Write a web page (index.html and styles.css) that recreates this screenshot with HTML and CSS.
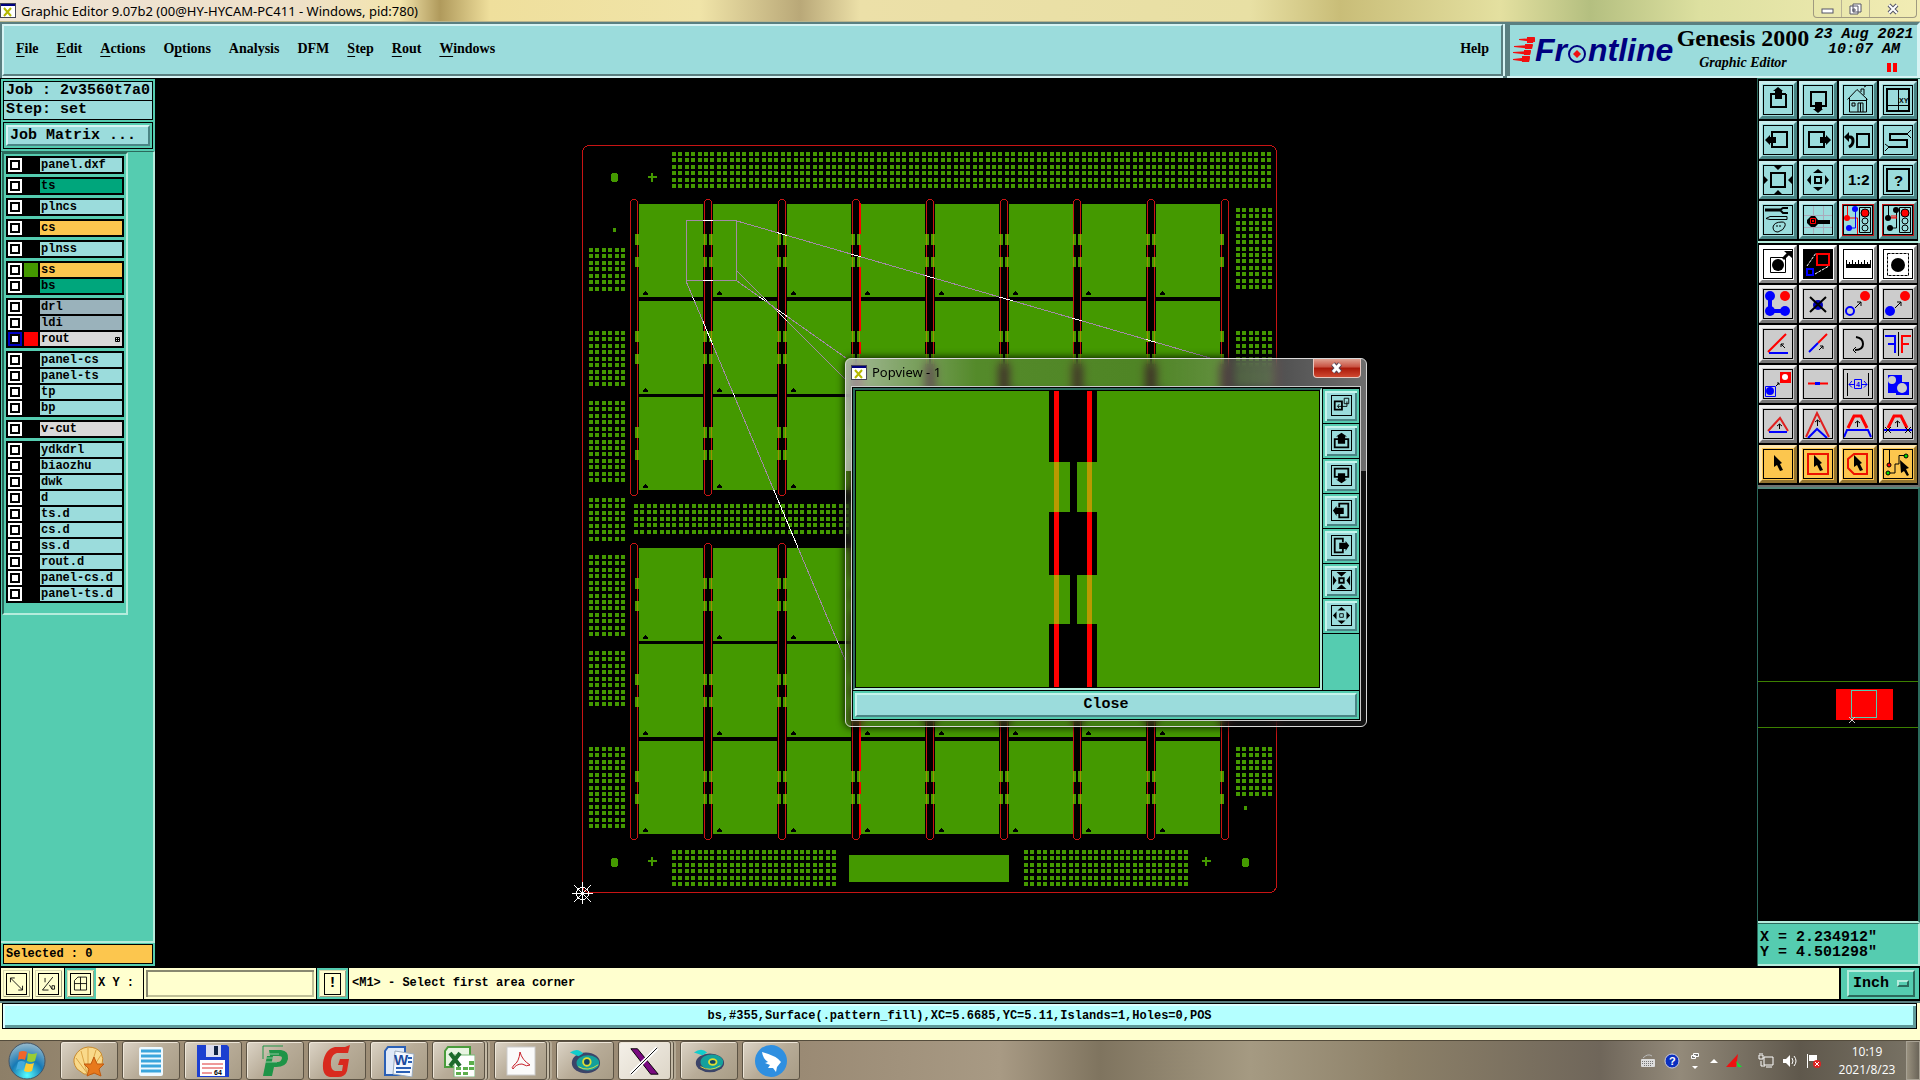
FILE: index.html
```html
<!DOCTYPE html>
<html lang="en">
<head>
  <meta charset="UTF-8">
  <title>Graphic Editor 9.07b2</title>
  <link rel="stylesheet" href="styles.css">
</head>
<body>
  <header class="titlebar">
    <svg class="app-icon" viewBox="0 0 16 15"><rect x="0" y="0" width="16" height="15" fill="#445"/><rect x="1" y="3" width="14" height="11" fill="#fff"/><rect x="1" y="1" width="14" height="2" fill="#000080"/><path d="M4 5l7 8M11 5l-7 8" stroke="#b5b800" stroke-width="2"/></svg>
    <span class="title">Graphic Editor 9.07b2 (00@HY-HYCAM-PC411 - Windows, pid:780)</span>
    <div class="win-buttons">
      <button aria-label="Minimize"><svg width="14" height="12"><rect x="1" y="6" width="11" height="4" fill="#fff" stroke="#556"/></svg></button>
      <button aria-label="Restore"><svg width="14" height="12"><path d="M4 1h8v8h-8zM1 3h8v8h-8z" fill="#fff" stroke="#556"/><path d="M4 6h2v2h-2z" fill="none" stroke="#556"/></svg></button>
      <button class="wide" aria-label="Close"><svg width="14" height="12"><path d="M3 2l8 8M11 2l-8 8" stroke="#556" stroke-width="4"/><path d="M3 2l8 8M11 2l-8 8" stroke="#fff" stroke-width="2"/></svg></button>
    </div>
  </header>

  <div class="top">
    <nav class="menubar">
      <a href="#"><u>F</u>ile</a>
      <a href="#"><u>E</u>dit</a>
      <a href="#"><u>A</u>ctions</a>
      <a href="#">O<u>p</u>tions</a>
      <a href="#">Analysis</a>
      <a href="#">DFM</a>
      <a href="#"><u>S</u>tep</a>
      <a href="#"><u>R</u>out</a>
      <a href="#"><u>W</u>indows</a>
      <a href="#" class="help">Help</a>
    </nav>
    <div class="brand">
      <div class="logo">
        <svg class="speed" viewBox="0 0 22 26"><path d="M22 1L6 2v1l16 2zM20 8L1 9v1l18 2zM18 14L0 15v1l17 2zM17 20L0 22v1l16 2z" fill="#f01010"/><path d="M14 0h8l-2 6h-6zM12 7h8l-2 5h-6zM11 13h7l-1 5h-6zM9 19h8l-1 6H9z" fill="#f01010"/></svg>
        <span>Fr</span><svg class="ring" viewBox="0 0 21 21"><circle cx="10" cy="11" r="8" fill="none" stroke="#000080" stroke-width="2"/><path d="M10 7l4 4-4 4-4-4z" fill="#f01010"/></svg><span>ntline</span>
      </div>
      <div class="product">
        <div class="genesis">Genesis 2000</div>
        <div class="sub">Graphic Editor</div>
      </div>
      <div class="clock">23 Aug 2021<br>10:07 AM<i class="pause"></i></div>
    </div>
  </div>

  <main>
    <aside class="left">
      <div class="job">
        <div>Job : 2v3560t7a0</div>
        <div>Step: set</div>
      </div>
      <div class="matrix"><button>Job Matrix ...</button></div>
      <div class="layer-area">
        <div class="layers">
          <div class="group"><label><input type="checkbox"><i></i><span>panel.dxf</span></label></div>
          <div class="group"><label><input type="checkbox"><i></i><span class="green">ts</span></label></div>
          <div class="group"><label><input type="checkbox"><i></i><span>plncs</span></label></div>
          <div class="group"><label><input type="checkbox"><i></i><span class="amber">cs</span></label></div>
          <div class="group"><label><input type="checkbox"><i></i><span>plnss</span></label></div>
          <div class="group">
            <label><input type="checkbox"><i class="c-green"></i><span class="amber">ss</span></label>
            <label><input type="checkbox"><i></i><span class="green">bs</span></label>
          </div>
          <div class="group">
            <label><input type="checkbox"><i></i><span class="steel">drl</span></label>
            <label><input type="checkbox"><i></i><span class="steel">ldi</span></label>
            <label><input type="checkbox" class="work"><i class="c-red"></i><span class="grey">rout<svg viewBox="0 0 5 5"><path d="M.5.5h4v4h-4zM2.5 0v5M0 2.5h5" fill="none" stroke="#000"/></svg></span></label>
          </div>
          <div class="group">
            <label><input type="checkbox"><i></i><span>panel-cs</span></label>
            <label><input type="checkbox"><i></i><span>panel-ts</span></label>
            <label><input type="checkbox"><i></i><span>tp</span></label>
            <label><input type="checkbox"><i></i><span>bp</span></label>
          </div>
          <div class="group"><label><input type="checkbox"><i></i><span class="grey">v-cut</span></label></div>
          <div class="group">
            <label><input type="checkbox"><i></i><span>ydkdrl</span></label>
            <label><input type="checkbox"><i></i><span>biaozhu</span></label>
            <label><input type="checkbox"><i></i><span>dwk</span></label>
            <label><input type="checkbox"><i></i><span>d</span></label>
            <label><input type="checkbox"><i></i><span>ts.d</span></label>
            <label><input type="checkbox"><i></i><span>cs.d</span></label>
            <label><input type="checkbox"><i></i><span>ss.d</span></label>
            <label><input type="checkbox"><i></i><span>rout.d</span></label>
            <label><input type="checkbox"><i></i><span>panel-cs.d</span></label>
            <label><input type="checkbox"><i></i><span>panel-ts.d</span></label>
          </div>
        </div>
      </div>
      <div class="selected">Selected : 0</div>
    </aside>

    <section class="canvas">
      <svg id="board" viewBox="155 78 1602 888" preserveAspectRatio="xMinYMin meet" shape-rendering="crispEdges"></svg>

      <div class="popview">
        <div class="pop-title">
          <svg class="app-icon" viewBox="0 0 16 15"><rect x="0" y="0" width="16" height="15" fill="#445"/><rect x="1" y="3" width="14" height="11" fill="#fff"/><rect x="1" y="1" width="14" height="2" fill="#000080"/><path d="M4 5l7 8M11 5l-7 8" stroke="#b5b800" stroke-width="2"/></svg>
          <span>Popview - 1</span>
          <button aria-label="Close"><svg width="14" height="12"><path d="M3 2l7 8M10 2l-7 8" stroke="#545" stroke-width="5"/><path d="M3 2l7 8M10 2l-7 8" stroke="#fff" stroke-width="3"/></svg></button>
        </div>
        <div class="pop-body">
          <div class="pop-main">
            <div class="pop-view">
              <svg viewBox="0 0 464 297" preserveAspectRatio="xMidYMid slice" shape-rendering="crispEdges">
                <rect width="464" height="297" fill="#449900"/>
                <path d="M193 0h49v71h-49zM193 121h49v63h-49zM193 234h49v63h-49zM214 0h7v297h-7z" fill="#000"/>
                <path d="M198 0h5v297h-5zM231 0h6v297h-6z" fill="#f00"/>
                <path d="M198 71h5v50h-5zM231 71h6v50h-6zM198 184h5v50h-5zM231 184h6v50h-6z" fill="#b99a00"/>
              </svg>
            </div>
            <div class="pop-tools">
              <button aria-label="Pick"><svg viewBox="0 0 21 21"><path d="M3 6h8v9H3z" fill="none" stroke="#000" stroke-width="2"/><path d="M13.500 2.500h5v6h-5zM16.500 6v5.500h-10M8 9l-2 2.500 2 2" fill="none" stroke="#000"/></svg></button>
              <button aria-label="Pan up"><svg viewBox="0 0 21 21"><path d="M7 9H3v9h15V9h-4" fill="none" stroke="#000" stroke-width="2"/><path d="M10.500 2l6 4h-2v8h-8V6h-2z"/></svg></button>
              <button aria-label="Pan down"><svg viewBox="0 0 21 21"><path d="M7 12H3V3h15v9h-4" fill="none" stroke="#000" stroke-width="2"/><path d="M10.500 19l6-4h-2V8h-8v7h-2z"/></svg></button>
              <button aria-label="Pan left"><svg viewBox="0 0 21 21"><path d="M8 7V3h10v15H8v-4" fill="none" stroke="#000" stroke-width="2"/><path d="M1 10.500l4-5v2h8v7H5v2z"/></svg></button>
              <button aria-label="Pan right"><svg viewBox="0 0 21 21"><path d="M12 7V3H3v15h9v-4" fill="none" stroke="#000" stroke-width="2"/><path d="M19 10.500l-4-5v2H8v7h7v2z"/></svg></button>
              <button aria-label="Zoom in"><svg viewBox="0 0 21 21"><path d="M8 8h5v5H8z" fill="none" stroke="#000" stroke-width="2"/><path d="M5 1h11l-5.500 5zM5 20h11l-5.500-5zM1 5v11l4-5.500zM20 5v11l-4-5.500z"/></svg></button>
              <button aria-label="Zoom out"><svg viewBox="0 0 21 21"><path d="M8.500 8.500h4v4h-4z" fill="none" stroke="#000"/><path d="M6 5h9l-4.500-4zM6 16h9l-4.500 4zM5 6v9l-4-4.500zM16 6v9l4-4.500z"/></svg></button>
            </div>
          </div>
          <div class="pop-foot"><button>Close</button></div>
        </div>
      </div>
    </section>

    <aside class="right">
      <div class="tools">
        <button aria-label="Pan up"><svg viewBox="0 0 30 30"><path d="M8 9v13h15V9" fill="none" stroke="#000" stroke-width="2"/><path d="M7 9h16" stroke="#000" stroke-width="2"/><path d="M15 2l5 4h-1v8h-7V6h-2z"/></svg></button>
        <button aria-label="Pan down"><svg viewBox="0 0 30 30"><path d="M8 7h15v14H8z" fill="none" stroke="#000" stroke-width="2"/><path d="M15 28l5-4h-1v-7h-7v7h-2z"/></svg></button>
        <button aria-label="Home"><svg viewBox="0 0 30 30"><path d="M4.500 14.500L14 4.500l10.500 10M6.500 13v14h17V13M6 15.500h18M18 7V4h3v6M9 18h3v3H9zM15 27v-9h5v9M17.500 18v9M21 2l2-1" fill="none" stroke="#000"/></svg></button>
        <button aria-label="Set origin"><svg viewBox="0 0 30 30"><path d="M4 4h22v22H4z" fill="none" stroke="#000" stroke-width="2"/><path d="M15.500 3v24M3 20.500h24" stroke="#000"/><text x="16" y="18" class="t7">XY</text></svg></button>
        <button aria-label="Pan left"><svg viewBox="0 0 30 30"><path d="M9 7h15v15H9z" fill="none" stroke="#000" stroke-width="2"/><path d="M2 15l5-5v2h6v6H7v2z"/></svg></button>
        <button aria-label="Pan right"><svg viewBox="0 0 30 30"><path d="M6 7h15v15H6z" fill="none" stroke="#000" stroke-width="2"/><path d="M28 15l-5-5v2h-6v6h6v2z"/></svg></button>
        <button aria-label="Previous view"><svg viewBox="0 0 30 30"><path d="M14 9h12v13H14z" fill="none" stroke="#000" stroke-width="2"/><path d="M4 12h3q3 0 3 4t-4 6" fill="none" stroke="#000" stroke-width="3"/><path d="M1 12l5-5v10z"/></svg></button>
        <button aria-label="Serpentine"><svg viewBox="0 0 30 30"><path d="M24 9H7v6h17v7H5" fill="none" stroke="#000" stroke-width="2"/><path d="M24 9l4-4M24 9l4 4M6 22l-4-3M6 22l-4 4" stroke="#000"/></svg></button>
        <button aria-label="Zoom in"><svg viewBox="0 0 30 30"><path d="M8 8h14v14H8z" fill="none" stroke="#000" stroke-width="2"/><path d="M10 0h10l-5 5zM10 30h10l-5-5zM0 10v10l5-5zM30 10v10l-5-5z"/></svg></button>
        <button aria-label="Zoom out"><svg viewBox="0 0 30 30"><path d="M12 12h6v6h-6z" fill="none" stroke="#000" stroke-width="2"/><path d="M10 8h10l-5-4zM10 22h10l-5 4zM8 10v10l-4-5zM22 10v10l4-5z"/></svg></button>
        <button aria-label="Zoom ratio"><svg viewBox="0 0 30 30"><text x="5" y="20" class="t14">1:2</text></svg></button>
        <button aria-label="Info"><svg viewBox="0 0 30 30"><path d="M4 4h22v22H4z" fill="none" stroke="#000" stroke-width="2"/><text x="11" y="21" class="t14">?</text></svg></button>
        <button aria-label="Setup"><svg viewBox="0 0 30 30"><path d="M2 5h15" stroke="#000" stroke-width="3"/><path d="M25 3h-5l-3 2 3 3h5" fill="none" stroke="#000" stroke-width="2"/><path d="M3 13.500L7 11.500h17v3H7zM19 17q4 0 3 4t-7 6q-5 0-5-5 1-5 9-5zM13 21h2M17 20v2" fill="none" stroke="#000"/></svg></button>
        <button aria-label="Magnifier"><svg viewBox="0 0 30 30"><path d="M10.500 1v28M20.500 1v28M1 10.500h28M1 22.500h28" stroke="#aab"/><path d="M8 11h4l3 4h12v4H15l-3 3H8l-4-4v-3z"/><path d="M7.500 13.500h5v5h-5z" fill="none" stroke="#f00"/><path d="M9 15h2v2H9z" fill="#f00"/></svg></button>
        <button class="hot" aria-label="Check nets"><svg viewBox="0 0 30 30"><path d="M4.500 0v13h10v17" fill="none" stroke="#f00"/><path d="M12.500 4v19H6" fill="none" stroke="#00f"/><circle cx="12" cy="4" r="3" fill="#00f"/><circle cx="6" cy="23" r="3" fill="#00f"/><circle cx="4" cy="13" r="3" fill="#f00"/><path d="M16.500 2.500h11v25h-11z" fill="none" stroke="#000"/><circle cx="22" cy="8" r="4" fill="#f00" stroke="#000"/><circle cx="22" cy="16" r="3" fill="none" stroke="#000"/><circle cx="22" cy="23" r="3" fill="none" stroke="#000"/></svg></button>
        <button class="hot" aria-label="Check shorts"><svg viewBox="0 0 30 30"><path d="M5.500 0v13M13.500 4v10M7.500 23h6v-9" fill="none" stroke="#000"/><path d="M8 13h6M9 10v3M11 10v3M13 10v3" stroke="#f00"/><circle cx="13" cy="5" r="3"/><circle cx="5" cy="13" r="3"/><circle cx="7" cy="23" r="3"/><path d="M16.500 2.500h11v25h-11z" fill="none" stroke="#000"/><circle cx="22" cy="8" r="4" fill="#f00" stroke="#000"/><circle cx="22" cy="16" r="3" fill="none" stroke="#000"/><circle cx="22" cy="23" r="3" fill="none" stroke="#000"/></svg></button>
      </div>
      <div class="tools edit">
        <button class="white" aria-label="Select feature"><svg viewBox="0 0 30 30"><path d="M7.500 8.500h15v15h-15z" fill="none" stroke="#000"/><circle cx="15" cy="16" r="6"/><path d="M20 10l6-6" stroke="#000" stroke-width="3"/><path d="M21 2h8v7z"/></svg></button>
        <button class="white" aria-label="Popview"><svg viewBox="0 0 30 30"><rect width="30" height="30"/><path d="M14 5h12v11H14z" fill="none" stroke="#f00" stroke-width="2"/><path d="M4 20h6v6H4z" fill="none" stroke="#00f" stroke-width="2"/><path d="M4 17l9-13M12 25l14-8" stroke="#fff" stroke-dasharray="3 1"/></svg></button>
        <button class="white" aria-label="Measure"><svg viewBox="0 0 30 30"><path d="M3 15h25v4H3z"/><path d="M3.500 11v5M6.500 13v3M9.500 11v5M12.500 13v3M15.500 11v5M18.500 13v3M21.500 11v5M24.500 13v3M27.500 11v5" stroke="#000"/></svg></button>
        <button class="white" aria-label="Highlight"><svg viewBox="0 0 30 30"><path d="M4.500 4.500h21v22h-21z" fill="none" stroke="#000" stroke-dasharray="3 1"/><circle cx="15" cy="16" r="7"/></svg></button>
        <button aria-label="Move line ends"><svg viewBox="0 0 30 30"><path d="M7 7v15h15" fill="none" stroke="#00f" stroke-width="4"/><circle cx="7" cy="7" r="5" fill="#00f"/><circle cx="7" cy="22" r="5" fill="#00f"/><circle cx="22" cy="22" r="5" fill="#00f"/><circle cx="22" cy="7" r="5" fill="#f00"/></svg></button>
        <button aria-label="Delete"><svg viewBox="0 0 30 30"><circle cx="15" cy="16" r="5" fill="#00b"/><path d="M7 8l16 15M23 8L7 23" stroke="#000" stroke-width="2"/></svg></button>
        <button aria-label="Move"><svg viewBox="0 0 30 30"><circle cx="7" cy="22" r="4" fill="none" stroke="#00f" stroke-width="2"/><circle cx="22" cy="7" r="5" fill="#f00"/><path d="M12 19l6-6M14 13h4v4" fill="none" stroke="#000"/></svg></button>
        <button aria-label="Copy"><svg viewBox="0 0 30 30"><circle cx="7" cy="22" r="5" fill="#00f"/><circle cx="22" cy="7" r="5" fill="#f00"/><path d="M12 19l6-6M14 13h4v4" fill="none" stroke="#000"/></svg></button>
        <button aria-label="Rotate line"><svg viewBox="0 0 30 30"><path d="M5 23L23 5" stroke="#f00" stroke-width="2"/><path d="M6 24h19" stroke="#00f" stroke-width="2"/><path d="M22 19l-4-4M18 18v-3h3" fill="none" stroke="#000"/></svg></button>
        <button aria-label="Extend line"><svg viewBox="0 0 30 30"><path d="M15 14l9-9" stroke="#f00" stroke-width="2"/><path d="M6 23l9-9" stroke="#00f" stroke-width="2"/><path d="M16 21l4-4M17 17h3v3" fill="none" stroke="#000"/></svg></button>
        <button aria-label="Rotate"><svg viewBox="0 0 30 30"><path d="M13 8q7 1 7 7t-8 6" fill="none" stroke="#000" stroke-width="2"/><path d="M13 18l-3 3 3 3" fill="none" stroke="#000"/></svg></button>
        <button aria-label="Mirror"><svg viewBox="0 0 30 30"><path d="M2 7h10v17M12 15H5" fill="none" stroke="#00f" stroke-width="2"/><path d="M28 7H19v17M19 15h7" fill="none" stroke="#f00" stroke-width="2"/><path d="M15.500 3v24" stroke="#000"/></svg></button>
        <button aria-label="Change symbol"><svg viewBox="0 0 30 30"><path d="M17 3h11v11H17z" fill="#f00"/><circle cx="22" cy="8" r="3" fill="#fff"/><path d="M2.500 17.500h10v10h-10z" fill="none" stroke="#00f"/><circle cx="7" cy="22" r="4" fill="#00f"/><path d="M13 17l3-3M14 14h2v2" fill="none" stroke="#000"/></svg></button>
        <button aria-label="Break line"><svg viewBox="0 0 30 30"><path d="M5 14.500h20" stroke="#f00" stroke-width="2"/><path d="M12 14.500h5" stroke="#00f" stroke-width="3"/></svg></button>
        <button aria-label="Spacing"><svg viewBox="0 0 30 30"><path d="M4.500 4v23M25.500 4v23" stroke="#000"/><path d="M6 15.500h5M19 15.500h5M9 12l-3 3.500 3 3M21 12l3 3.500-3 3M11.500 10.500h7v9h-7z" fill="none" stroke="#00f"/><text x="13" y="18" class="t7 blue">4</text></svg></button>
        <button aria-label="Surface"><svg viewBox="0 0 30 30"><path d="M5 6h14v7h7v13H13v-2H5z" fill="#00f"/><circle cx="9" cy="11" r="4" fill="#ccc"/><circle cx="19" cy="19" r="5" fill="#ccc"/></svg></button>
        <button aria-label="Stretch corner"><svg viewBox="0 0 30 30"><path d="M5 22L17 9l8 13" fill="none" stroke="#e02020" stroke-width="2"/><path d="M6 23h18" stroke="#00f" stroke-width="2"/><path d="M16.500 20v-5M14 17l2.500-2 2.500 2" fill="none" stroke="#000"/></svg></button>
        <button aria-label="Stretch peak"><svg viewBox="0 0 30 30"><path d="M3 28L14 4l12 24" fill="none" stroke="#e02020" stroke-width="2"/><path d="M5 29l9-9 10 9" fill="none" stroke="#00f" stroke-width="2"/><path d="M14.500 17v-6M12 13l2.500-2 2.500 2" fill="none" stroke="#000"/></svg></button>
        <button aria-label="Stretch line"><svg viewBox="0 0 30 30"><path d="M5 19l6-12h7l6 12" fill="none" stroke="#f00" stroke-width="3"/><path d="M1 28l3-7h21l3 7" fill="none" stroke="#00f" stroke-width="2"/><path d="M14.500 18v-6M12 14l2.500-2 2.500 2" fill="none" stroke="#000"/></svg></button>
        <button aria-label="Stretch parallel"><svg viewBox="0 0 30 30"><path d="M5 19l6-12h7l6 12" fill="none" stroke="#f00" stroke-width="3"/><path d="M1 21h28" stroke="#00f" stroke-width="2"/><path d="M14.500 18v-6M12 14l2.500-2 2.500 2M2 18l6 6M8 18l-6 6M22 18l6 6M28 18l-6 6" fill="none" stroke="#000"/></svg></button>
        <button class="gold" aria-label="Single select"><svg viewBox="0 0 30 30"><path d="M11 6l8 8-2 1 3 6-3 1-3-6-3 2z"/></svg></button>
        <button class="gold" aria-label="Frame select"><svg viewBox="0 0 30 30"><path d="M5 5h20v20H5z" fill="none" stroke="#e10" stroke-width="2"/><path d="M11 6l8 8-2 1 3 6-3 1-3-6-3 2z"/></svg></button>
        <button class="gold" aria-label="Polygon select"><svg viewBox="0 0 30 30"><path d="M11 5h13v20H11l-6-6v-9z" fill="none" stroke="#e10" stroke-width="2"/><path d="M11 6l8 8-2 1 3 6-3 1-3-6-3 2z"/></svg></button>
        <button class="gold" aria-label="Net select"><svg viewBox="0 0 30 30"><path d="M6.500 0v17M5 24h7v-9h4V6.500h7" fill="none" stroke="#000"/><circle cx="6" cy="16" r="2" fill="#f00" stroke="#000"/><circle cx="5" cy="24" r="2" fill="#0d0" stroke="#000"/><circle cx="23" cy="7" r="2" fill="#0d0" stroke="#000"/><path d="M17 11l9 8-3 1 3 6-2 1-3-5-3 2z"/></svg></button>
      </div>
      <div class="overview">
        <svg viewBox="0 0 160 430" shape-rendering="crispEdges">
          <path d="M0 192.500h160M0 238.500h160" stroke="#3c8000"/>
          <rect x="78" y="200" width="57" height="31" fill="#f00"/>
          <path d="M93.500 201.500h25v27h-25z" fill="none" stroke="#55ccb0"/>
          <path d="M91 228l6 6M97 228l-6 6" stroke="#ccc"/>
        </svg>
      </div>
      <div class="coords">X = 2.234912"<br>Y = 4.501298"</div>
    </aside>
  </main>

  <div class="command">
    <button aria-label="Absolute"><svg viewBox="0 0 22 22"><path d="M4 4l14 14M4 9V4h5M18 13v5h-5" fill="none" stroke="#000"/></svg></button>
    <button aria-label="Angle"><svg viewBox="0 0 22 22"><path d="M4 18L16 3M4 18h7M7 4v5M12 12l3 5M15 13h3v4h-3z" fill="none" stroke="#000"/></svg></button>
    <button class="on" aria-label="Grid"><svg viewBox="0 0 22 22"><path d="M4 18V7l4-4h10v15zM4 10.500h14M11 3v15" fill="none" stroke="#000"/></svg></button>
    <label for="xy">X Y :</label>
    <input type="text" id="xy">
    <button class="on warn"><span>!</span></button>
    <div class="message">&lt;M1&gt; - Select first area corner</div>
    <div class="units">
      <select aria-label="Units"><option>Inch</option><option>MM</option></select><i></i>
    </div>
  </div>

  <div class="status"><div>bs,#355,Surface(.pattern_fill),XC=5.6685,YC=5.11,Islands=1,Holes=0,POS</div></div>

  <footer class="taskbar">
    <button class="start" aria-label="Start"><svg viewBox="0 0 38 38">
      <defs><radialGradient id="orb" cx=".5" cy=".9" r=".9"><stop offset="0" stop-color="#5ff"/><stop offset=".5" stop-color="#1779b5"/><stop offset="1" stop-color="#9bc"/></radialGradient></defs>
      <circle cx="19" cy="19" r="18" fill="url(#orb)" stroke="#456"/>
      <path d="M11 10q4-2 8 0l-2 8q-4-2-7 0z" fill="#f0652a"/><path d="M20 11q4 2 9 0l-2 8q-4 2-8 0z" fill="#9c3"/><path d="M10 20q3-2 7 0l-2 8q-4-2-7 0z" fill="#4ad"/><path d="M18 21q4 2 8 0l-2 8q-4 2-8 0z" fill="#fc3"/>
    </svg></button>
    <button class="task" aria-label="Shell"><svg viewBox="0 0 32 32"><path d="M11 29l-7-5Q-1 17 2 11 6 3 15 2q9 0 13 6 3 5 1 12l-9 9z" fill="#f9d98a" stroke="#c98a2c"/><path d="M14 28L3 13M14 28L8 6M15 28V3M16 28l7-23M17 27L28 10" stroke="#dba548"/><path d="M21 12l3 7 7 0-5 5 2 7-7-3-7 3 2-7-5-5 7 0z" fill="#e8791c" stroke="#c05a10"/></svg></button>
    <button class="task" aria-label="Notes"><svg viewBox="0 0 32 32"><rect x="4" y="2" width="24" height="29" rx="2" fill="#eef9ff"/><path d="M6 6h20M6 11h20M6 16h20M6 21h20M6 26h20" stroke="#3aa5dc" stroke-width="3"/></svg></button>
    <button class="task" aria-label="Disk"><svg viewBox="0 0 32 32"><path d="M0 0h30l2 2v30H0z" fill="#1c3fd0"/><rect x="9" y="0" width="15" height="12" fill="#dde"/><rect x="17" y="1" width="4" height="9" fill="#124"/><rect x="3" y="15" width="25" height="16" fill="#fff"/><path d="M5 19h21M5 23h21M5 28h10" stroke="#d33" stroke-width="1"/><text x="17" y="30" class="t7">64</text></svg></button>
    <button class="task" aria-label="P tool"><svg viewBox="0 0 32 32"><path d="M4 14V1h20" fill="none" stroke="#1e9447"/><path d="M4 31l4-20h6l-4 20z" fill="#1e9447"/><path d="M10 5h12q8 1 7 9-2 9-14 8l-2 9H8l3-14h8q3 0 4-4 0-2-3-2h-9z" fill="#1e9447"/><path d="M8 9h12M7 13h10M6 17h12" stroke="#8fc59d"/></svg></button>
    <button class="task" aria-label="G tool"><svg viewBox="0 0 32 32"><path d="M29 0l-2 8H16q-5 1-6 8-1 9 4 10h7l1-6h-5l2-6h9l-2 12q-2 6-9 6H9q-8-1-7-14Q4 4 14 2h10z" fill="#d82a1e"/></svg></button>
    <button class="task" aria-label="Word"><svg viewBox="0 0 32 32"><path d="M5 2h17v28H2V6z" fill="#dfe9f8" stroke="#2a5fb5" stroke-width="2"/><path d="M12 6l19 3-2 23-19-3z" fill="#f4f8ff" stroke="#9ab"/><text x="11" y="20" class="t14 word">W</text><path d="M25 13h4M25 17h4M13 23h15M13 27h14" stroke="#2a5fb5" stroke-width="2"/></svg></button>
    <button class="task stacked" aria-label="Excel"><svg viewBox="0 0 32 32"><path d="M5 2h22v20H2V6z" fill="#e8f4e2" stroke="#4a9c3c" stroke-width="2"/><path d="M11 10h21v22H11z" fill="#fff" stroke="#7b7"/><path d="M13 22h5v3h-5zM20 22h5v3h-5zM13 27h5v3h-5zM20 27h5v3h-5zM26 16h5v4h-5zM26 22h5v3h-5z" fill="#5cae4c"/><path d="M7 8l10 13M17 8L7 21" stroke="#1c6a2b" stroke-width="4"/></svg></button>
    <button class="task stacked" aria-label="PDF reader"><svg viewBox="0 0 32 32"><rect x="2" y="2" width="28" height="28" fill="#fafafa" stroke="#ccc"/><path d="M15 7q2 8 10 13-3 2-8-1-6 0-9 5-2-1 1-4 5-3 6-13z" fill="none" stroke="#c8202a" stroke-width="1"/></svg></button>
    <button class="task" aria-label="Genesis"><svg viewBox="0 0 34 32"><ellipse cx="18" cy="18" rx="15" ry="11" fill="#3c4468"/><ellipse cx="20" cy="18" rx="12" ry="8" fill="#14a09c"/><ellipse cx="19" cy="17" rx="4" ry="4" fill="#146" stroke="#dd3" stroke-width="2"/><path d="M10 22q10 6 21-2" fill="none" stroke="#dd4"/><path d="M1 7q8-6 14 1l-5 3z" fill="#1cc"/></svg></button>
    <button class="task active stacked" aria-label="X server"><svg viewBox="0 0 34 32"><path d="M2 3h7l22 27h-8z" fill="#7a0a80" stroke="#000"/><path d="M30 2L2 30" stroke="#fff" stroke-width="4"/><path d="M30 2L2 30" stroke="#000"/></svg></button>
    <button class="task" aria-label="Genesis 2"><svg viewBox="0 0 34 32"><ellipse cx="18" cy="18" rx="15" ry="10" fill="#3c4468"/><ellipse cx="20" cy="17" rx="12" ry="8" fill="#14a09c"/><ellipse cx="21" cy="17" rx="4" ry="3" fill="#146" stroke="#dd3" stroke-width="2"/><path d="M8 22q10 6 21-1" fill="none" stroke="#dd4"/><path d="M1 7q8-6 14 0l-5 3z" fill="#1cc"/></svg></button>
    <button class="task" aria-label="Messenger"><svg viewBox="0 0 32 32"><circle cx="16" cy="16" r="16" fill="#2f8fe0"/><path d="M7 7q15 4 19 10l-4 5-1 5-3-4h-5l2-3-5-2 3-1q-5-3-6-10z" fill="#fff"/></svg></button>
    <div class="tray">
      <svg class="t-kbd" viewBox="0 0 16 14"><path d="M3 4q5-5 9-2" fill="none" stroke="#bbb"/><rect x="1" y="5" width="14" height="8" rx="1" fill="#ddd"/><path d="M2 7.500h12M2 9.500h12M4 11.500h8" stroke="#777" stroke-dasharray="1 1"/></svg>
      <svg class="t-help" viewBox="0 0 16 16"><circle cx="8" cy="8" r="7" fill="#0a2fc0" stroke="#ccd"/><text x="5" y="12" class="q">?</text></svg>
      <svg class="t-win" viewBox="0 0 10 18"><path d="M3.500 1.500h5v3h-5zM1.500 3.500h4v3h-4z" fill="#777" stroke="#fff"/><path d="M2 14h6l-3 3z" fill="#fff"/></svg>
      <svg class="t-up" viewBox="0 0 8 6"><path d="M0 5h8l-4-4z" fill="#fff"/></svg>
      <svg class="t-ati" viewBox="0 0 16 14"><path d="M0 13l12-13-2 13z" fill="#e11"/><path d="M10 7l6 6h-4z" fill="#1d3"/></svg>
      <svg class="t-net" viewBox="0 0 16 16"><path d="M6 4h9v8H6zM8 14h6M3 8v5h4M1 2v4h4V2M2 0v3M4 0v3" fill="none" stroke="#fff" stroke-width="1"/></svg>
      <svg class="t-vol" viewBox="0 0 16 14"><path d="M1 5h3l4-4v12L4 9H1z" fill="#fff"/><path d="M10 4q2 3 0 6M12 2q4 5 0 10" fill="none" stroke="#fff"/></svg>
      <svg class="t-flag" viewBox="0 0 16 16"><path d="M1.500 1v14" stroke="#fff"/><path d="M3 2h8v6H3z" fill="#fff"/><circle cx="11" cy="11" r="4" fill="#d22"/><path d="M9 9l4 4M13 9l-4 4" stroke="#fff"/></svg>
      <div class="time">10:19<br>2021/8/23</div>
      <button class="desktop" aria-label="Show desktop"></button>
    </div>
  </footer>

  <script>
    const GREEN = "#449900";
    const board = document.getElementById("board");
    let out = "";

    function rect(x, y, w, h, fill) {
      return `<rect x="${x}" y="${y}" width="${w}" height="${h}" fill="${fill}"/>`;
    }

    // copper dot pattern on the panel border
    function dots(x, y, cols, rows) {
      let d = "";
      for (let r = 0; r < rows; r++) {
        for (let c = 0; c < cols; c++) {
          d += `M${x + Math.round(c * 6.4)} ${y + Math.round(r * 6.42)}h4v4h-4z`;
        }
      }
      out += `<path d="${d}" fill="${GREEN}"/>`;
    }

    const slotX = i => 630 + Math.round(i * 73.9);
    const rows = [204, 301, 397, 548, 644, 741];

    out += `<rect x="582.5" y="145.5" width="694" height="747" rx="7" fill="none" stroke="#c81414"/>`;

    dots(672, 152, 94, 6);
    [[248, 7], [331, 9], [401, 13], [498, 7], [555, 13], [651, 9], [747, 13]].forEach(g => dots(589, g[0], 6, g[1]));
    [[208, 13], [331, 9], [747, 8]].forEach(g => dots(1236, g[0], 6, g[1]));
    dots(634, 504, 92, 5);
    dots(672, 850, 26, 6);
    dots(1024, 850, 26, 6);
    out += rect(849, 855, 160, 27, GREEN);

    // fiducials and crosses
    [[614, 177], [614, 862], [1245, 862]].forEach(p => out += `<rect x="${p[0] - 3}" y="${p[1] - 4}" width="7" height="9" rx="3" fill="${GREEN}"/>`);
    [[614, 230], [1245, 808]].forEach(p => out += rect(p[0] - 1, p[1] - 2, 3, 4, GREEN));
    [[652, 177], [652, 861], [1206, 861]].forEach(p => out += rect(p[0] - 4, p[1] - 1, 9, 2, GREEN) + rect(p[0] - 1, p[1] - 4, 2, 9, GREEN));

    // board cells
    rows.forEach(y => {
      for (let i = 0; i < 8; i++) {
        const x = slotX(i) + 9;
        out += rect(x, y, 64, 93, GREEN);
        out += `<path d="M${x + 4} ${y + 91}v-1l2-3h1l2 3v1z"/>`;
      }
    });

    // routed slots with break tabs
    for (let i = 0; i < 9; i++) {
      const x = slotX(i);
      [[199, 296], [543, 296]].forEach(s => {
        out += `<rect x="${x + .5}" y="${s[0] + .5}" width="7" height="${s[1]}" rx="3.500" fill="#000" stroke="#c81414"/>`;
        if (i === 3) out += rect(x + 7, s[0] + 4, 2, s[1] - 8, "#f00");
      });
      rows.forEach(y => [[30, 11], [53, 10]].forEach(t => {
        if (i > 0) out += rect(x - 1, y + t[0], 4, t[1], GREEN) + rect(x, y + t[0], 1, t[1], "#a09000");
        if (i < 8) out += rect(x + 5, y + t[0], 4, t[1], GREEN) + rect(x + 7, y + t[0], 1, t[1], "#a09000");
      }));
    }

    // popview frame and leader lines, bright where they cross black
    const leader = "M686.5 220.5h50v60h-50zM737 221L1210 358M737 271L846 380M737 281L846 358M686 281L846 662";
    let gaps = "";
    for (let i = 0; i < 9; i++) gaps += rect(slotX(i) - 1, 199, 10, 297, "#000");
    gaps += rect(639, 297, 590, 4, "#000") + rect(639, 393, 590, 4, "#000") + rect(639, 490, 590, 58, "#000") + rect(639, 641, 590, 3, "#000");
    out += `<clipPath id="gaps">${gaps}</clipPath>`;
    out += `<path d="${leader}" fill="none" stroke="#a28aa6"/>`;
    out += `<path d="${leader}" fill="none" stroke="#fff" clip-path="url(#gaps)"/>`;

    // datum mark
    out += `<g stroke="#fff" fill="none"><path d="M582.5 882v22M572 893.500h21M574 885l17 17M591 885l-17 17"/><circle cx="582.5" cy="893.5" r="6"/></g>`;

    board.innerHTML = out;
  </script>
</body>
</html>
```
FILE: styles.css
```css
* {
  box-sizing: border-box;
}

body {
  margin: 0;
  min-height: 100vh;
  display: flex;
  flex-direction: column;
  background: #000;
  color: #000;
  font-family: "Liberation Mono", monospace;
  font-weight: bold;
  font-size: 12px;
  overflow: hidden;
}

button, input, select {
  font: inherit;
  color: inherit;
  margin: 0;
  padding: 0;
  border: 0;
  border-radius: 0;
  background: none;
}

svg {
  display: block;
}

.t7 {
  font: bold 7px "Liberation Sans", sans-serif;
}

.t14 {
  font: bold 15px "Liberation Sans", sans-serif;
}

.blue {
  fill: #00f;
}

.word {
  fill: #1d4a9c;
}

.q {
  font: bold 11px "Liberation Sans", sans-serif;
  fill: #fff;
}

/* title bar */
.titlebar {
  height: 22px;
  display: flex;
  align-items: center;
  background: linear-gradient(to right, #efe4d6 0, #eee0c8 300px, #f3e5ac 400px, #b09a5c 440px, #efdf9c 490px, #f0e4a8 700px, #b9a878 800px, #ece0a8 860px, #e8e0a4 1250px, #c9bd78 1340px, #e4e0a0 1500px, #b4bf80 1590px, #dde0a0 1700px, #f2ecb4 100%);
  border-bottom: 1px solid #b8b48c;
}

.app-icon {
  width: 16px;
  height: 15px;
}

.title {
  margin-left: 5px;
  flex: 1;
  font: 13px "Noto Sans", "Open Sans", sans-serif;
}

.win-buttons {
  display: flex;
  align-self: flex-start;
  height: 18px;
  margin-right: 3px;
  border: 1px solid #a09a80;
  border-top: 0;
  border-radius: 0 0 4px 4px;
}

.win-buttons button {
  width: 28px;
  display: flex;
  align-items: center;
  justify-content: center;
  border-right: 1px solid #b8b294;
}

.win-buttons .wide {
  width: 46px;
  border-right: 0;
}

/* menu and brand */
.top {
  display: flex;
  height: 56px;
  background: #5a7f80;
  padding-left: 2px;
}

.menubar {
  flex: 1;
  display: flex;
  align-items: center;
  gap: 18px;
  margin: 2px 0;
  padding: 0 12px 2px;
  background: #9bdcdc;
  border: 2px solid;
  border-color: #d6f4f4 #5a7f80 #5a7f80 #d6f4f4;
  box-shadow: 0 2px 0 #d6f4f4, 2px 0 0 #d6f4f4;
}

.menubar a {
  color: #000;
  text-decoration: none;
  font: bold 14px/20px "Liberation Serif", serif;
}

.menubar u {
  text-underline-offset: 3px;
}

.menubar .help {
  margin-left: auto;
}

.brand {
  width: 413px;
  margin: 0 0 2px 4px;
  display: flex;
  background: #9bdcdc;
  border: 3px solid;
  border-color: #5a7f80 #d6f4f4 #d6f4f4 #5a7f80;
  border-bottom: 0;
  box-shadow: 0 2px 0 #d6f4f4;
}

.logo {
  display: flex;
  align-items: center;
  width: 165px;
  padding: 0 0 2px 3px;
  color: #000080;
  font: italic bold 32px/40px "Liberation Sans", sans-serif;
}

.speed {
  width: 22px;
  height: 26px;
}

.ring {
  width: 21px;
  height: 21px;
  margin-top: 7px;
}

.product {
  width: 136px;
  text-align: center;
}

.genesis {
  font: bold 24px/26px "Liberation Serif", serif;
  white-space: nowrap;
}

.sub {
  font: italic bold 14px/24px "Liberation Serif", serif;
}

.clock {
  flex: 1;
  padding-top: 2px;
  font: italic bold 15px/15px "Liberation Mono", monospace;
  text-align: center;
  white-space: nowrap;
}

.pause {
  display: block;
  width: 10px;
  height: 9px;
  margin: 6px 20px 0 auto;
  border: solid #f00;
  border-width: 0 4px;
}

/* main */
main {
  flex: 1;
  display: flex;
  min-height: 0;
}

.left {
  width: 155px;
  display: flex;
  flex-direction: column;
  background: #55ccb0;
  border-top: 1px solid #000;
  border-left: 1px solid #000;
}

.job {
  margin: 2px;
  border: 1px solid #000;
  font-size: 15px;
  line-height: 18px;
  background: #9bdcdc;
  white-space: nowrap;
}

.job div {
  padding-left: 2px;
}

.job div + div {
  border-top: 1px solid #000;
}

.matrix {
  margin: 0 2px;
  padding: 2px;
  border: 1px solid #000;
}

.matrix button {
  display: block;
  width: 100%;
  height: 21px;
  padding-left: 2px;
  text-align: left;
  font-size: 15px;
  line-height: 17px;
  background: #9bdcdc;
  border: 2px solid;
  border-color: #d6f4f4 #4a8585 #4a8585 #d6f4f4;
}

.layer-area {
  flex: 1;
  margin-top: 2px;
  border: solid #b5ecdc;
  border-width: 0 2px 2px 0;
  border-top: 1px solid #2b6a5c;
}

.layers {
  width: 126px;
  display: flex;
  flex-direction: column;
  gap: 3px;
  padding: 2px 2px 10px;
  margin-left: 1px;
  border: 2px solid;
  border-color: #2b6a5c #b5ecdc #b5ecdc #2b6a5c;
}

.group {
  display: flex;
  flex-direction: column;
  gap: 2px;
  padding: 2px;
  background: #000;
}

.group label {
  display: flex;
  gap: 2px;
  height: 14px;
}

.group input {
  appearance: none;
  width: 14px;
  height: 14px;
  border: 2px solid #fff;
  background: #fff;
  box-shadow: inset 0 0 0 2px #000;
}

.group .work {
  border-color: #0000c0;
}

.group i {
  width: 14px;
}

.group span {
  flex: 1;
  display: flex;
  align-items: center;
  justify-content: space-between;
  padding: 0 2px 0 1px;
  line-height: 14px;
  background: #9bdcdc;
}

.group span svg {
  width: 5px;
  height: 5px;
}

.group .green {
  background: #00a67c;
}

.group .amber {
  background: #fcc64e;
}

.group .steel {
  background: #9ab2bb;
}

.group .grey {
  background: #d9d9d9;
}

.group .c-green {
  background: #449900;
}

.group .c-red {
  background: #f00;
}

.selected {
  height: 20px;
  margin: 1px 2px 2px;
  padding-left: 2px;
  line-height: 18px;
  border: 1px solid #000;
  background: #fcc64e;
}

.canvas {
  flex: 1;
  position: relative;
  background: #000;
  overflow: hidden;
}

#board {
  width: 100%;
  height: 100%;
}

/* popview window */
.popview {
  position: absolute;
  left: 690px;
  top: 280px;
  width: 522px;
  height: 369px;
  display: flex;
  flex-direction: column;
  padding: 0 5px 5px;
  border: 1px solid #d8d8d8;
  border-radius: 6px;
  background: linear-gradient(to right, rgba(230, 225, 240, .6), rgba(255, 255, 255, .1) 130px, rgba(200, 200, 200, .1) 300px, rgba(200, 200, 200, .5)) 0 0 / 100% 112px no-repeat, rgba(60, 60, 60, .3);
  backdrop-filter: blur(5px);
  box-shadow: 0 0 8px #000;
}

.pop-title {
  height: 28px;
  display: flex;
  align-items: center;
}

.pop-title span {
  flex: 1;
  margin-left: 5px;
  font: 13px "Noto Sans", "Open Sans", sans-serif;
}

.pop-title button {
  align-self: flex-start;
  width: 48px;
  height: 19px;
  display: flex;
  align-items: center;
  justify-content: center;
  border: 1px solid #e8c8c0;
  border-top: 0;
  border-radius: 0 0 4px 4px;
  background: linear-gradient(#e0a090, #c85040 45%, #a81808 50%, #d04830);
}

.pop-body {
  flex: 1;
  display: flex;
  flex-direction: column;
  background: #000;
  border: 1px solid #ccc;
  padding: 1px;
  gap: 1px;
}

.pop-main {
  flex: 1;
  display: flex;
  gap: 1px;
  min-height: 0;
}

.pop-view {
  flex: 1;
  border: 2px solid;
  border-color: #2b6a5c #b5ecdc #b5ecdc #2b6a5c;
}

.pop-view svg {
  width: 100%;
  height: 100%;
  border: 1px solid #000;
}

.pop-tools {
  width: 36px;
  display: flex;
  flex-direction: column;
  gap: 1px;
  padding-top: 1px;
  background: linear-gradient(#000, #000) 0 0 / 100% 246px no-repeat, #55ccb0;
}

.pop-tools button {
  height: 34px;
  padding: 1px;
  border: 2px solid #55ccb0;
  background: #9bdcdc;
  box-shadow: inset 2px 2px 0 #c4f4ec, inset -2px -2px 0 #4a8585;
}

.pop-tools svg {
  width: 21px;
  height: 21px;
  margin: 0 auto;
  border: 1px solid #000;
}

.pop-foot {
  padding: 2px;
  background: #55ccb0;
}

.pop-foot button {
  display: block;
  width: 100%;
  height: 24px;
  font-size: 15px;
  line-height: 20px;
  background: #9bdcdc;
  border: 2px solid;
  border-color: #c4f4ec #4a8585 #4a8585 #c4f4ec;
}

/* tool panel */
.right {
  width: 163px;
  display: flex;
  flex-direction: column;
  background: #000;
  border-top: 1px solid #2b6a5c;
  border-left: 1px solid #2b6a5c;
}

.tools {
  display: grid;
  grid-template-columns: repeat(4, 38px);
  gap: 2px;
  padding: 2px 1px;
  border-right: 2px solid #b5ecdc;
  border-bottom: 2px solid #b5ecdc;
}

.tools.edit {
  border-right-color: #606060;
  border-bottom-color: #707070;
}

.tools button {
  height: 38px;
  padding: 1px;
  background: #9bdcdc;
  border: 3px solid;
  border-color: #c8ecec #4a8585 #4a8585 #c8ecec;
}

.tools svg {
  width: 30px;
  height: 30px;
  outline: 1px solid #000;
  outline-offset: -1px;
}

.tools .hot {
  border-color: #c8ecec #4a8585 #4a8585 #c8ecec;
  box-shadow: inset 0 0 0 2px #c01818;
}

.tools.edit button {
  background: #ccc;
  border-color: #f0f0f0 #777 #777 #f0f0f0;
}

.tools.edit .white {
  background: #fff;
  border-color: #fff #888 #888 #fff;
}

.tools.edit .gold {
  background: #fcc64e;
  border-color: #ffe8b0 #947430 #947430 #ffe8b0;
}

.overview {
  flex: 1;
  min-height: 0;
  border-top: 2px solid #55877c;
  border-right: 2px solid #2b6a5c;
  border-bottom: 2px solid #b5ecdc;
}

.overview svg {
  width: 160px;
  height: 430px;
}

.coords {
  height: 43px;
  padding: 6px 2px;
  background: #55ccb0;
  border-top: 1px solid #2b6a5c;
  border-right: 2px solid #b5ecdc;
  border-bottom: 2px solid #b5ecdc;
  font-size: 15px;
  line-height: 15px;
}

/* command line */
.command {
  height: 35px;
  display: flex;
  gap: 1px;
  padding: 2px 1px;
  background: #000;
}

.command button {
  width: 31px;
  padding: 2px;
  border: 2px solid #ffffcf;
  background: #ffffcf;
  box-shadow: inset 1px 1px 0 #d8d8b0, inset -1px -1px 0 #a0a080;
}

.command .on {
  border-color: #55ccb0;
}

.command button svg {
  width: 21px;
  height: 22px;
  margin: auto;
  border: 1px solid #000;
}

.warn span {
  display: block;
  width: 17px;
  height: 22px;
  margin: auto;
  border: 1px solid #000;
  font-size: 15px;
  line-height: 20px;
}

.command label {
  width: 47px;
  padding-left: 2px;
  margin-left: -1px;
  line-height: 31px;
  background: #ffffcf;
}

.command input {
  width: 172px;
  padding: 0 6px;
  background: #ffffcf;
  border: 2px solid #ffffcf;
  box-shadow: inset 2px 2px 0 #888870, inset -2px -2px 0 #c0c098;
}

.message {
  flex: 1;
  padding-left: 3px;
  line-height: 31px;
  background: #ffffcf;
}

.units {
  width: 78px;
  margin-left: 1px;
  padding: 2px 4px 2px 6px;
  position: relative;
  background: #55ccb0;
}

.units select {
  appearance: none;
  width: 100%;
  height: 27px;
  padding-left: 4px;
  font-size: 15px;
  border: 2px solid;
  border-color: #b5ecdc #2b6a5c #2b6a5c #b5ecdc;
}

.units i {
  position: absolute;
  right: 10px;
  top: 12px;
  width: 12px;
  height: 7px;
  border: 2px solid;
  border-color: #b5ecdc #2b6a5c #2b6a5c #b5ecdc;
}

.status {
  background: #ffffcf;
  padding: 0 3px 11px 2px;
  border-top: 2px solid #5a7f80;
}

.status div {
  height: 26px;
  border: 1px solid #000;
  background: #b4ffff;
  box-shadow: inset 2px 2px 0 #dcffff, inset -3px -3px 0 #5f9a9a;
  line-height: 24px;
  text-align: center;
}

/* taskbar */
.taskbar {
  height: 40px;
  display: flex;
  gap: 4px;
  border-top: 1px solid #544c3c;
  background: linear-gradient(to right, #8d7f68, #a09078 200px, #9a8a74 800px, #a89a84 1000px, #7f745f 1100px, #a59a82 1250px, #8c8068 1400px, #6f665a 1600px, #938a7a 1680px, #5f584c 1800px, #7a7466);
}

.start {
  width: 56px;
}

.start svg {
  width: 38px;
  height: 38px;
  margin-left: 8px;
}

.task {
  width: 58px;
  display: flex;
  align-items: center;
  justify-content: center;
  border: 1px solid #5c5344;
  border-radius: 3px;
  background: linear-gradient(135deg, #dcd4c6, #b8ac98 50%, #a89c86);
  box-shadow: inset 1px 1px 0 #eee6d8;
}

.task svg {
  width: 32px;
  height: 32px;
}

.stacked {
  width: 53px;
  margin-right: 5px;
  box-shadow: inset 1px 1px 0 #eee6d8, 2px 0 0 #c4baa6, 3px 0 0 #5c5344, 5px 0 0 #b4a994;
}

.active {
  background: linear-gradient(135deg, #f4f0e8, #ddd6c8);
}

.tray {
  margin-left: auto;
  display: flex;
  align-items: center;
  gap: 8px;
  color: #fff;
}

.t-kbd, .t-help, .t-ati, .t-net, .t-vol, .t-flag {
  width: 16px;
  height: 16px;
}

.t-win {
  width: 10px;
  height: 18px;
  margin: 0 2px;
}

.t-up {
  width: 8px;
  height: 6px;
}

.t-net {
  margin-left: 8px;
}

.time {
  width: 62px;
  text-align: center;
  margin-left: 6px;
  font: 12px/18px "Open Sans", "Noto Sans", sans-serif;
}

.desktop {
  align-self: stretch;
  width: 14px;
  border: 1px solid #a8a294;
  background: linear-gradient(to right, #99917f, #6a6458);
}
```
